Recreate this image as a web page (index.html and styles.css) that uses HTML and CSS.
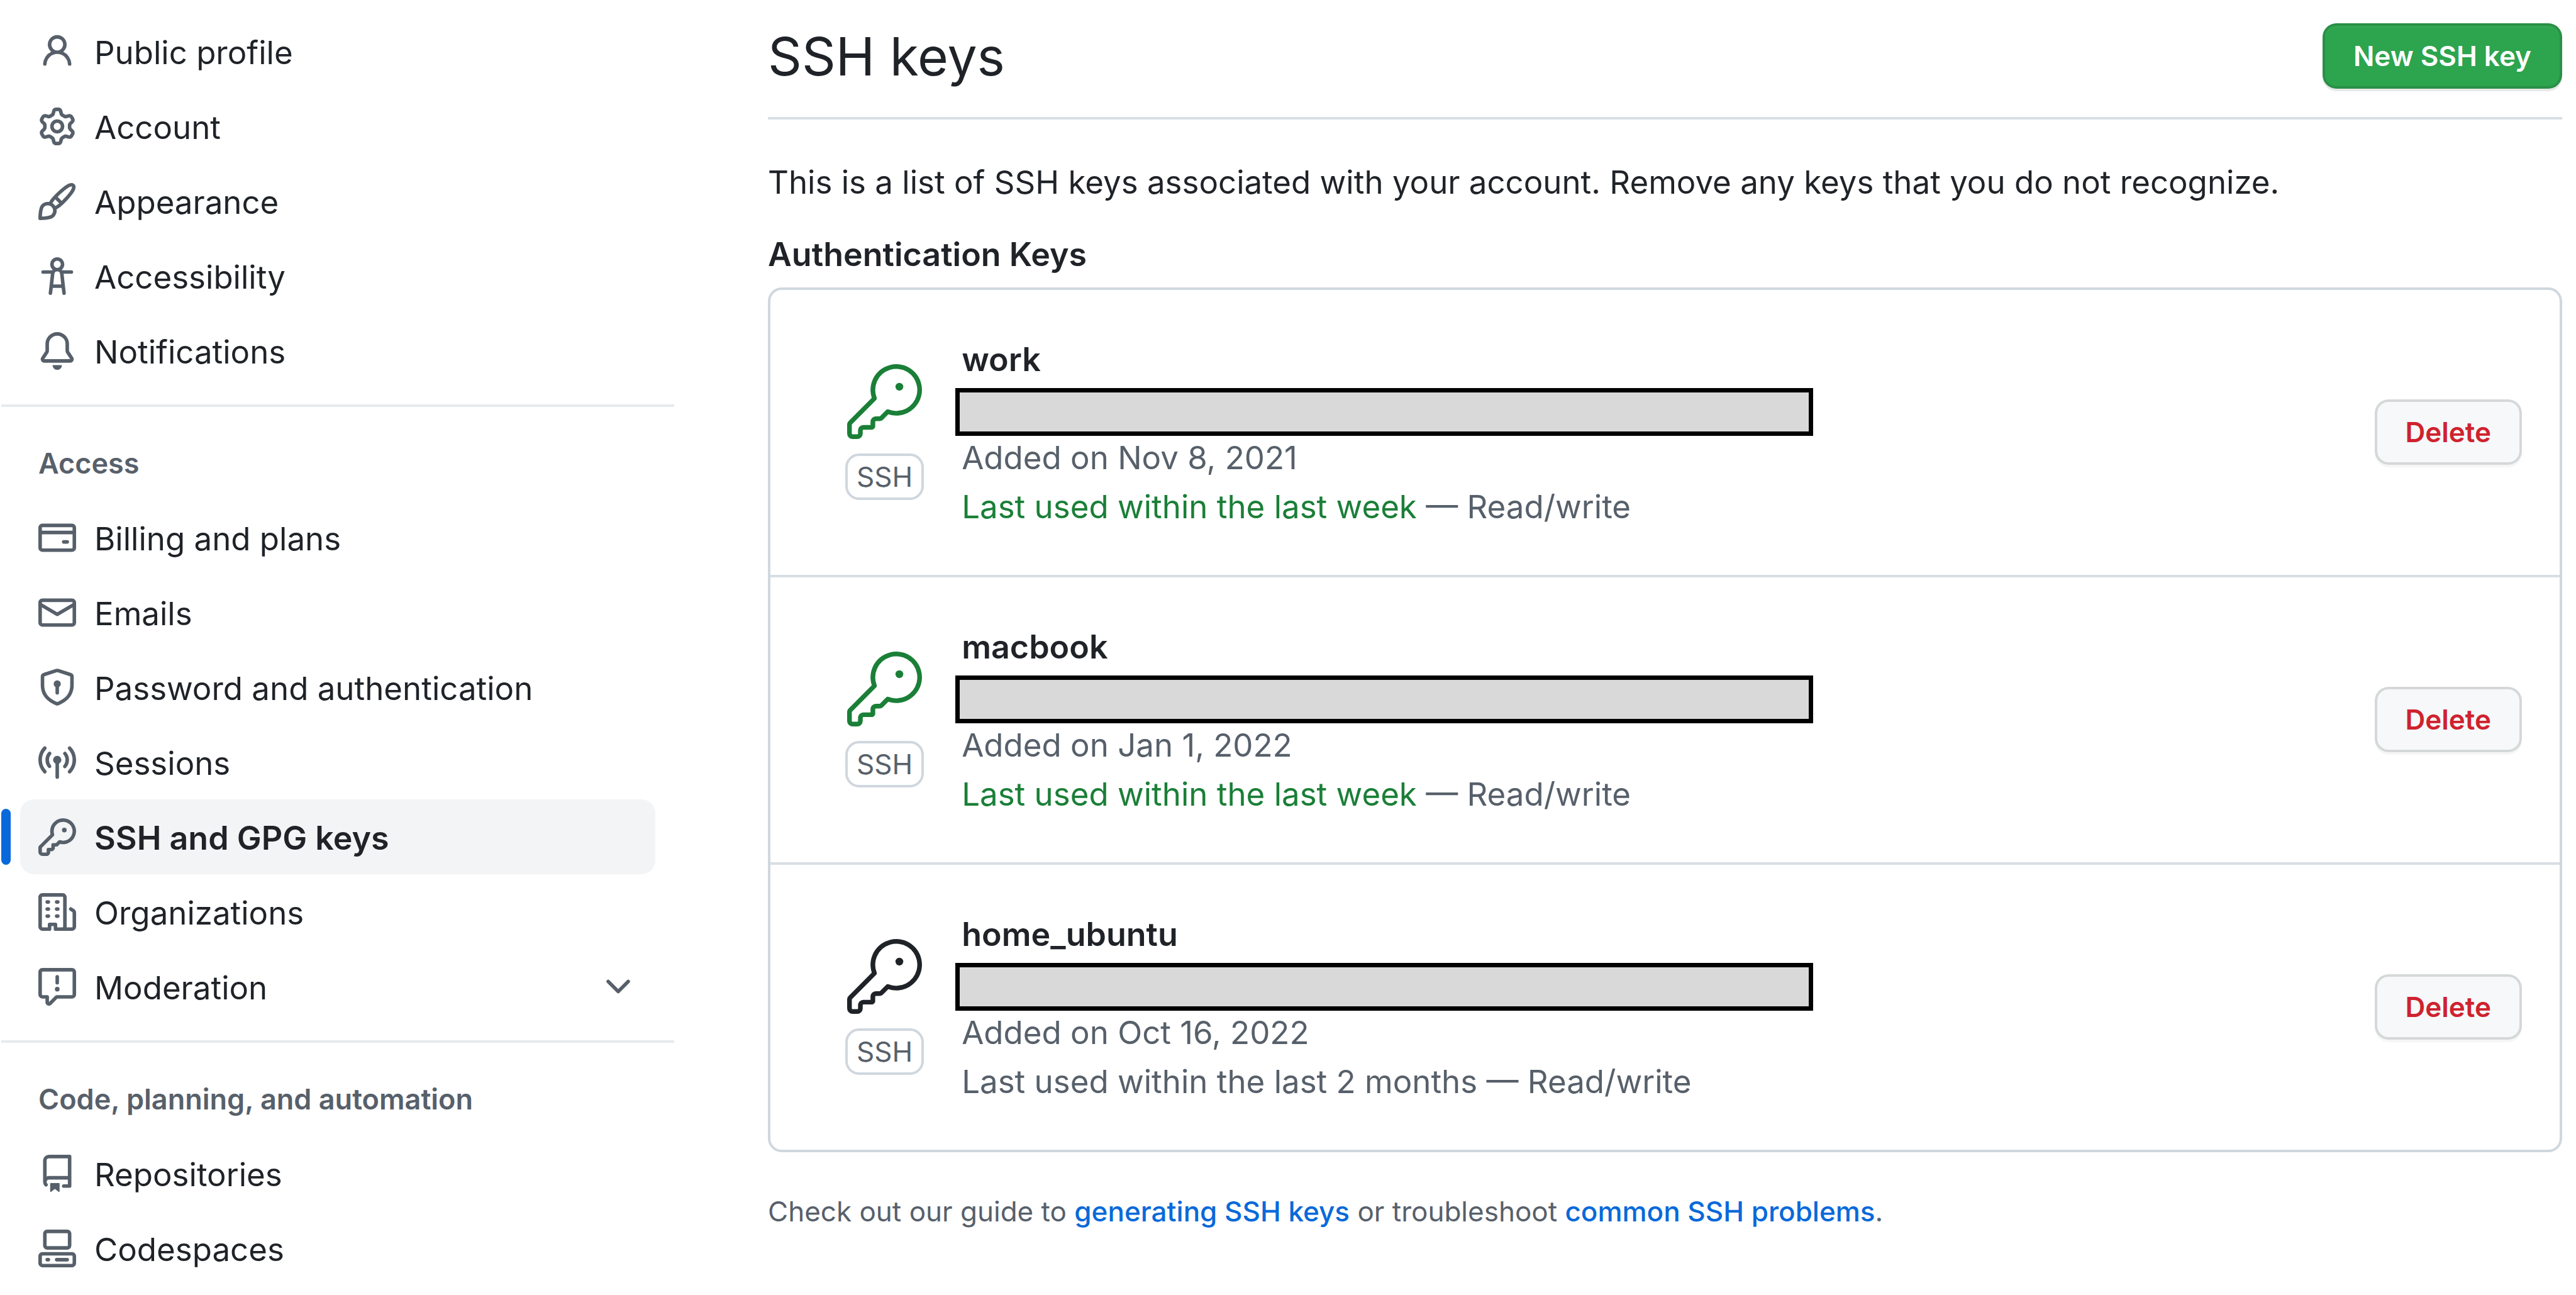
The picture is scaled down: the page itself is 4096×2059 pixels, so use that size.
FILE: index.html
```html
<!DOCTYPE html>
<html lang="en">
<head>
<meta charset="utf-8">
<title>SSH and GPG keys</title>
<meta name="viewport" content="width=device-width, initial-scale=1">
<link rel="stylesheet" href="styles.css">
</head>
<body>
<svg class="sprite" aria-hidden="true">
  <symbol id="person" viewBox="0 0 16 16"><path d="M10.561 8.073a6.005 6.005 0 0 1 3.432 5.142.75.75 0 1 1-1.498.07 4.5 4.5 0 0 0-8.99 0 .75.75 0 0 1-1.498-.07 6.004 6.004 0 0 1 3.431-5.142 3.999 3.999 0 1 1 5.123 0ZM10.5 5a2.5 2.5 0 1 0-5 0 2.5 2.5 0 0 0 5 0Z"/></symbol>
  <symbol id="gear" viewBox="0 0 16 16"><path d="M8 0a8.2 8.2 0 0 1 .701.031C9.444.095 9.99.645 10.16 1.29l.288 1.107c.018.066.079.158.212.224.231.114.454.243.668.386.123.082.233.09.299.071l1.103-.303c.644-.176 1.392.021 1.82.63.27.385.506.792.704 1.218.315.675.111 1.422-.364 1.891l-.814.806c-.049.048-.098.147-.088.294.016.257.016.515 0 .772-.01.147.038.246.088.294l.814.806c.475.469.679 1.216.364 1.891a7.977 7.977 0 0 1-.704 1.217c-.428.61-1.176.807-1.82.63l-1.102-.302c-.067-.019-.177-.011-.3.071a5.909 5.909 0 0 1-.668.386c-.133.066-.194.158-.211.224l-.29 1.106c-.168.646-.715 1.196-1.458 1.26a8.006 8.006 0 0 1-1.402 0c-.743-.064-1.289-.614-1.458-1.26l-.289-1.106c-.018-.066-.079-.158-.212-.224a5.738 5.738 0 0 1-.668-.386c-.123-.082-.233-.09-.299-.071l-1.103.303c-.644.176-1.392-.021-1.82-.63a8.12 8.12 0 0 1-.704-1.218c-.315-.675-.111-1.422.363-1.891l.815-.806c.05-.048.098-.147.088-.294a6.214 6.214 0 0 1 0-.772c.01-.147-.038-.246-.088-.294l-.815-.806C.635 6.045.431 5.298.746 4.623a7.92 7.92 0 0 1 .704-1.217c.428-.61 1.176-.807 1.82-.63l1.102.302c.067.019.177.011.3-.071.214-.143.437-.272.668-.386.133-.066.194-.158.211-.224l.29-1.106C6.009.645 6.556.095 7.299.03 7.53.01 7.764 0 8 0Zm-.571 1.525c-.036.003-.108.036-.137.146l-.289 1.105c-.147.561-.549.967-.998 1.189-.173.086-.34.183-.5.29-.417.278-.97.423-1.529.27l-1.103-.303c-.109-.03-.175.016-.195.045-.22.312-.412.644-.573.99-.014.031-.021.11.059.19l.815.806c.411.406.562.957.53 1.456a4.709 4.709 0 0 0 0 .582c.032.499-.119 1.05-.53 1.456l-.815.806c-.081.08-.073.159-.059.19.162.346.353.677.573.989.02.03.085.076.195.046l1.102-.303c.56-.153 1.113-.008 1.53.27.161.107.328.204.501.29.447.222.85.629.997 1.189l.289 1.105c.029.109.101.143.137.146a6.6 6.6 0 0 0 1.142 0c.036-.003.108-.036.137-.146l.289-1.105c.147-.561.549-.967.998-1.189.173-.086.34-.183.5-.29.417-.278.97-.423 1.529-.27l1.103.303c.109.029.175-.016.195-.045.22-.313.411-.644.573-.99.014-.031.021-.11-.059-.19l-.815-.806c-.411-.406-.562-.957-.53-1.456a4.709 4.709 0 0 0 0-.582c-.032-.499.119-1.05.53-1.456l.815-.806c.081-.08.073-.159.059-.19a6.464 6.464 0 0 0-.573-.989c-.02-.03-.085-.076-.195-.046l-1.102.303c-.56.153-1.113.008-1.53-.27a4.44 4.44 0 0 0-.501-.29c-.447-.222-.85-.629-.997-1.189l-.289-1.105c-.029-.11-.101-.143-.137-.146a6.6 6.6 0 0 0-1.142 0ZM11 8a3 3 0 1 1-6 0 3 3 0 0 1 6 0ZM9.5 8a1.5 1.5 0 1 0-3.001.001A1.5 1.5 0 0 0 9.5 8Z"/></symbol>
  <symbol id="paintbrush" viewBox="0 0 16 16"><path d="M11.134 1.535c.7-.509 1.416-.942 2.076-1.155.649-.21 1.463-.267 2.069.34.603.601.568 1.411.368 2.07-.202.668-.624 1.39-1.125 2.096-1.011 1.424-2.496 2.987-3.775 4.249-1.098 1.084-2.132 1.839-3.04 2.3a3.744 3.744 0 0 1-1.055 3.217c-.431.431-1.065.691-1.657.861-.614.177-1.294.287-1.914.357A21.151 21.151 0 0 1 .797 16H.743l.007-.75H.749L.742 16a.75.75 0 0 1-.743-.742l.743-.008-.742.007v-.054a21.25 21.25 0 0 1 .13-2.284c.067-.647.187-1.287.358-1.914.17-.591.43-1.226.86-1.657a3.746 3.746 0 0 1 3.227-1.054c.466-.893 1.225-1.907 2.314-2.982 1.271-1.255 2.833-2.75 4.245-3.777ZM1.62 13.089c-.051.464-.086.929-.104 1.395.466-.018.932-.053 1.396-.104a10.511 10.511 0 0 0 1.668-.309c.526-.151.856-.325 1.011-.48a2.25 2.25 0 1 0-3.182-3.182c-.155.155-.329.485-.48 1.01a10.515 10.515 0 0 0-.309 1.67Zm10.396-10.34c-1.224.89-2.605 2.189-3.822 3.384l1.718 1.718c1.21-1.205 2.51-2.597 3.387-3.833.47-.662.78-1.227.912-1.662.134-.444.032-.551.009-.575h-.001V1.78c-.014-.014-.113-.113-.548.027-.432.14-.995.462-1.655.942Zm-4.832 7.266-.001.001a9.859 9.859 0 0 0 1.63-1.142L7.155 7.216a9.7 9.7 0 0 0-1.161 1.607c.482.302.889.71 1.19 1.192Z"/></symbol>
  <symbol id="accessibility" viewBox="0 0 16 16"><path d="M9.923 5.302c.063.063.122.129.178.198H14A.75.75 0 0 1 14 7h-3.3l.578 5.163.362 2.997a.75.75 0 0 1-1.49.18L9.868 13H6.132l-.282 2.34a.75.75 0 0 1-1.49-.18l.362-2.997L5.3 7H2a.75.75 0 0 1 0-1.5h3.9a2.54 2.54 0 0 1 .176-.198 3 3 0 1 1 3.847 0ZM9.2 7.073h-.001a1.206 1.206 0 0 0-2.398 0L6.305 11.5h3.39ZM9.5 3a1.5 1.5 0 1 0-3.001.001A1.5 1.5 0 0 0 9.5 3Z"/></symbol>
  <symbol id="bell" viewBox="0 0 16 16"><path d="M8 16a2 2 0 0 0 1.985-1.75c.017-.137-.097-.25-.235-.25h-3.5c-.138 0-.252.113-.235.25A2 2 0 0 0 8 16ZM3 5a5 5 0 0 1 10 0v2.947c0 .05.015.098.042.139l1.703 2.555A1.519 1.519 0 0 1 13.482 13H2.518a1.516 1.516 0 0 1-1.263-2.36l1.703-2.554A.255.255 0 0 0 3 7.947Zm5-3.5A3.5 3.5 0 0 0 4.5 5v2.947c0 .346-.102.683-.294.97l-1.703 2.556a.017.017 0 0 0-.003.01l.001.006c0 .002.002.004.004.006l.006.004.007.001h10.964l.007-.001.006-.004.004-.006.001-.007a.017.017 0 0 0-.003-.01l-1.703-2.554a1.745 1.745 0 0 1-.294-.97V5A3.5 3.5 0 0 0 8 1.5Z"/></symbol>
  <symbol id="card" viewBox="0 0 16 16"><path d="M10.75 9a.75.75 0 0 0 0 1.5h1.5a.75.75 0 0 0 0-1.5h-1.5Z"/><path d="M0 3.75C0 2.784.784 2 1.75 2h12.5c.966 0 1.75.784 1.75 1.75v8.5A1.75 1.75 0 0 1 14.25 14H1.75A1.75 1.75 0 0 1 0 12.25ZM14.5 6.5h-13v5.75c0 .138.112.25.25.25h12.5a.25.25 0 0 0 .25-.25Zm0-2.75a.25.25 0 0 0-.25-.25H1.75a.25.25 0 0 0-.25.25V5h13Z"/></symbol>
  <symbol id="mail" viewBox="0 0 16 16"><path d="M1.75 2h12.5c.966 0 1.75.784 1.75 1.75v8.5A1.75 1.75 0 0 1 14.25 14H1.75A1.75 1.75 0 0 1 0 12.25v-8.5C0 2.784.784 2 1.75 2ZM1.5 12.251c0 .138.112.25.25.25h12.5a.25.25 0 0 0 .25-.25V5.809L8.38 9.397a.75.75 0 0 1-.76 0L1.5 5.809v6.442Zm13-8.181v-.32a.25.25 0 0 0-.25-.25H1.75a.25.25 0 0 0-.25.25v.32L8 7.88Z"/></symbol>
  <symbol id="shield" viewBox="0 0 16 16"><path d="m8.533.133 5.25 1.68A1.75 1.75 0 0 1 15 3.48V7c0 1.566-.32 3.182-1.303 4.682-.983 1.498-2.585 2.813-5.032 3.855a1.697 1.697 0 0 1-1.33 0c-2.447-1.042-4.049-2.357-5.032-3.855C1.32 10.182 1 8.566 1 7V3.48a1.755 1.755 0 0 1 1.217-1.667l5.25-1.68a1.748 1.748 0 0 1 1.066 0Zm-.61 1.429.001.001-5.25 1.68a.251.251 0 0 0-.174.237V7c0 1.36.275 2.666 1.057 3.859.784 1.194 2.121 2.342 4.366 3.298a.196.196 0 0 0 .154 0c2.245-.957 3.582-2.103 4.366-3.297C13.225 9.666 13.5 8.358 13.5 7V3.48a.25.25 0 0 0-.174-.238l-5.25-1.68a.25.25 0 0 0-.153 0ZM9.5 6.5c0 .536-.286 1.032-.75 1.3v2.45a.75.75 0 0 1-1.5 0V7.8A1.5 1.5 0 1 1 9.5 6.5Z"/></symbol>
  <symbol id="broadcast" viewBox="0 0 16 16"><path d="M8.75 8.582v5.668a.75.75 0 0 1-1.5 0V8.582a1.75 1.75 0 1 1 1.5 0Zm3.983-7.125a.75.75 0 0 1 1.06.026A7.976 7.976 0 0 1 16 7c0 2.139-.84 4.083-2.207 5.517a.75.75 0 1 1-1.086-1.034A6.474 6.474 0 0 0 14.5 7a6.474 6.474 0 0 0-1.793-4.483.75.75 0 0 1 .026-1.06Zm-9.466 0c.3.286.312.76.026 1.06A6.474 6.474 0 0 0 1.5 7a6.47 6.47 0 0 0 1.793 4.483.75.75 0 0 1-1.086 1.034A7.973 7.973 0 0 1 0 7c0-2.139.84-4.083 2.207-5.517a.75.75 0 0 1 1.06-.026Zm8.556 2.321A4.988 4.988 0 0 1 13 7a4.988 4.988 0 0 1-1.177 3.222.75.75 0 1 1-1.146-.967A3.487 3.487 0 0 0 11.5 7c0-.86-.309-1.645-.823-2.255a.75.75 0 0 1 1.146-.967Zm-6.492.958A3.48 3.48 0 0 0 4.5 7a3.48 3.48 0 0 0 .823 2.255.75.75 0 0 1-1.146.967A4.981 4.981 0 0 1 3 7a4.982 4.982 0 0 1 1.188-3.236.75.75 0 1 1 1.143.972Z"/></symbol>
  <symbol id="key" viewBox="0 0 16 16"><path d="M10.5 0a5.499 5.499 0 1 1-1.288 10.848l-.932.932a.749.749 0 0 1-.53.22H7v.75a.749.749 0 0 1-.22.53l-.5.5a.749.749 0 0 1-.53.22H5v.75a.749.749 0 0 1-.22.53l-.5.5a.749.749 0 0 1-.53.22h-2A1.75 1.75 0 0 1 0 14.25v-2c0-.199.079-.389.22-.53l4.932-4.932A5.5 5.5 0 0 1 10.5 0Zm-4 5.5c-.001.431.069.86.205 1.269a.75.75 0 0 1-.181.768L1.5 12.56v1.69c0 .138.112.25.25.25h1.69l.06-.06v-1.19a.75.75 0 0 1 .75-.75h1.19l.06-.06v-1.19a.75.75 0 0 1 .75-.75h1.19l1.023-1.025a.75.75 0 0 1 .768-.18A4 4 0 1 0 6.5 5.5ZM11 6a1 1 0 1 1 0-2 1 1 0 0 1 0 2Z"/></symbol>
  <symbol id="organization" viewBox="0 0 16 16"><path d="M1.75 16A1.75 1.75 0 0 1 0 14.25V1.75C0 .784.784 0 1.75 0h8.5C11.216 0 12 .784 12 1.75v12.5c0 .085-.006.168-.018.25h2.268a.25.25 0 0 0 .25-.25V8.285a.25.25 0 0 0-.111-.208l-1.055-.703a.749.749 0 1 1 .832-1.248l1.055.703c.487.325.779.871.779 1.456v5.965A1.75 1.75 0 0 1 14.25 16h-3.5a.766.766 0 0 1-.197-.026c-.099.017-.2.026-.303.026h-3a.75.75 0 0 1-.75-.75V14h-1v1.25a.75.75 0 0 1-.75.75Zm-.25-1.75c0 .138.112.25.25.25H4v-1.25a.75.75 0 0 1 .75-.75h2.5a.75.75 0 0 1 .75.75v1.25h2.25a.25.25 0 0 0 .25-.25V1.75a.25.25 0 0 0-.25-.25h-8.5a.25.25 0 0 0-.25.25ZM3.75 6h.5a.75.75 0 0 1 0 1.5h-.5a.75.75 0 0 1 0-1.5ZM3 3.75A.75.75 0 0 1 3.75 3h.5a.75.75 0 0 1 0 1.5h-.5A.75.75 0 0 1 3 3.75Zm4 3A.75.75 0 0 1 7.75 6h.5a.75.75 0 0 1 0 1.5h-.5A.75.75 0 0 1 7 6.75ZM7.75 3h.5a.75.75 0 0 1 0 1.5h-.5a.75.75 0 0 1 0-1.5ZM3 9.75A.75.75 0 0 1 3.75 9h.5a.75.75 0 0 1 0 1.5h-.5A.75.75 0 0 1 3 9.75ZM7.75 9h.5a.75.75 0 0 1 0 1.5h-.5a.75.75 0 0 1 0-1.5Z"/></symbol>
  <symbol id="report" viewBox="0 0 16 16"><path d="M0 1.75C0 .784.784 0 1.75 0h12.5C15.216 0 16 .784 16 1.75v9.5A1.75 1.75 0 0 1 14.25 13H8.06l-2.573 2.573A1.458 1.458 0 0 1 3 14.543V13H1.75A1.75 1.75 0 0 1 0 11.25Zm1.75-.25a.25.25 0 0 0-.25.25v9.5c0 .138.112.25.25.25h2a.75.75 0 0 1 .75.75v2.19l2.72-2.72a.749.749 0 0 1 .53-.22h6.5a.25.25 0 0 0 .25-.25v-9.5a.25.25 0 0 0-.25-.25Zm7 2.25v2.5a.75.75 0 0 1-1.5 0v-2.5a.75.75 0 0 1 1.5 0ZM9 9a1 1 0 1 1-2 0 1 1 0 0 1 2 0Z"/></symbol>
  <symbol id="chevron" viewBox="0 0 16 16"><path d="M12.78 5.22a.749.749 0 0 1 0 1.06l-4.25 4.25a.749.749 0 0 1-1.06 0L3.22 6.28a.749.749 0 1 1 1.06-1.06L8 8.939l3.72-3.719a.749.749 0 0 1 1.06 0Z"/></symbol>
  <symbol id="repo" viewBox="0 0 16 16"><path d="M2 2.5A2.5 2.5 0 0 1 4.5 0h8.75a.75.75 0 0 1 .75.75v12.5a.75.75 0 0 1-.75.75h-2.5a.75.75 0 0 1 0-1.5h1.75v-2h-8a1 1 0 0 0-.714 1.7.75.75 0 1 1-1.072 1.05A2.495 2.495 0 0 1 2 11.5Zm10.5-1h-8a1 1 0 0 0-1 1v6.708A2.486 2.486 0 0 1 4.5 9h8ZM5 12.25a.25.25 0 0 1 .25-.25h3.5a.25.25 0 0 1 .25.25v3.25a.25.25 0 0 1-.4.2l-1.45-1.087a.249.249 0 0 0-.3 0L5.4 15.7a.25.25 0 0 1-.4-.2Z"/></symbol>
  <symbol id="codespaces" viewBox="0 0 16 16"><path d="M0 11.25c0-.966.784-1.75 1.75-1.75h12.5c.966 0 1.75.784 1.75 1.75v3A1.75 1.75 0 0 1 14.25 16H1.75A1.75 1.75 0 0 1 0 14.25Zm2-9.5C2 .784 2.784 0 3.75 0h8.5C13.216 0 14 .784 14 1.75v5a1.75 1.75 0 0 1-1.75 1.75h-8.5A1.75 1.75 0 0 1 2 6.75Zm1.75-.25a.25.25 0 0 0-.25.25v5c0 .138.112.25.25.25h8.5a.25.25 0 0 0 .25-.25v-5a.25.25 0 0 0-.25-.25Zm-2 9.5a.25.25 0 0 0-.25.25v3c0 .138.112.25.25.25h12.5a.25.25 0 0 0 .25-.25v-3a.25.25 0 0 0-.25-.25Z"/><path d="M7 12.75a.75.75 0 0 1 .75-.75h4.5a.75.75 0 0 1 0 1.5h-4.5a.75.75 0 0 1-.75-.75Zm-4 0a.75.75 0 0 1 .75-.75h.5a.75.75 0 0 1 0 1.5h-.5a.75.75 0 0 1-.75-.75Z"/></symbol>
  <symbol id="key-large" viewBox="0 0 24 24"><path d="M16.75 8.5a1.25 1.25 0 1 0 0-2.5 1.25 1.25 0 0 0 0 2.5Z"/><path d="M15.75 0a8.25 8.25 0 1 1-2.541 16.101l-1.636 1.636a1.744 1.744 0 0 1-1.237.513H9.25a.25.25 0 0 0-.25.25v1.448a.876.876 0 0 1-.256.619l-.214.213a.75.75 0 0 1-.545.22H5.25a.25.25 0 0 0-.25.25v1A1.75 1.75 0 0 1 3.25 24h-1.5A1.75 1.75 0 0 1 0 22.25v-2.836c0-.464.185-.908.513-1.236l7.386-7.388A8.249 8.249 0 0 1 15.75 0ZM9 8.25a6.733 6.733 0 0 0 .463 2.462.75.75 0 0 1-.168.804l-7.722 7.721a.25.25 0 0 0-.073.177v2.836c0 .138.112.25.25.25h1.5a.25.25 0 0 0 .25-.25v-1c0-.966.784-1.75 1.75-1.75H7.5v-1c0-.966.784-1.75 1.75-1.75h1.086a.25.25 0 0 0 .177-.073l1.971-1.972a.75.75 0 0 1 .804-.168A6.75 6.75 0 1 0 9 8.25Z"/></symbol>
</svg>

<div class="page">
  <nav class="sidebar" aria-label="Settings">
    <ul class="nav-list">
      <li><a class="nav-item" href="#"><svg class="icon"><use href="#person"/></svg><span class="nav-text">Public profile</span></a></li>
      <li><a class="nav-item" href="#"><svg class="icon"><use href="#gear"/></svg><span class="nav-text">Account</span></a></li>
      <li><a class="nav-item" href="#"><svg class="icon"><use href="#paintbrush"/></svg><span class="nav-text">Appearance</span></a></li>
      <li><a class="nav-item" href="#"><svg class="icon"><use href="#accessibility"/></svg><span class="nav-text">Accessibility</span></a></li>
      <li><a class="nav-item" href="#"><svg class="icon"><use href="#bell"/></svg><span class="nav-text">Notifications</span></a></li>
    </ul>
    <section class="nav-group">
      <h2 class="nav-heading">Access</h2>
      <ul class="nav-list">
        <li><a class="nav-item" href="#"><svg class="icon"><use href="#card"/></svg><span class="nav-text">Billing and plans</span></a></li>
        <li><a class="nav-item" href="#"><svg class="icon"><use href="#mail"/></svg><span class="nav-text">Emails</span></a></li>
        <li><a class="nav-item" href="#"><svg class="icon"><use href="#shield"/></svg><span class="nav-text">Password and authentication</span></a></li>
        <li><a class="nav-item" href="#"><svg class="icon"><use href="#broadcast"/></svg><span class="nav-text">Sessions</span></a></li>
        <li><a class="nav-item active" href="#" aria-current="page"><svg class="icon"><use href="#key"/></svg><span class="nav-text">SSH and GPG keys</span></a></li>
        <li><a class="nav-item" href="#"><svg class="icon"><use href="#organization"/></svg><span class="nav-text">Organizations</span></a></li>
        <li><button class="nav-item" type="button" aria-expanded="false"><svg class="icon"><use href="#report"/></svg><span class="nav-text">Moderation</span><svg class="icon chevron"><use href="#chevron"/></svg></button></li>
      </ul>
    </section>
    <section class="nav-group">
      <h2 class="nav-heading">Code, planning, and automation</h2>
      <ul class="nav-list">
        <li><a class="nav-item" href="#"><svg class="icon"><use href="#repo"/></svg><span class="nav-text">Repositories</span></a></li>
        <li><a class="nav-item" href="#"><svg class="icon"><use href="#codespaces"/></svg><span class="nav-text">Codespaces</span></a></li>
      </ul>
    </section>
  </nav>

  <main class="content">
    <header class="page-head">
      <h1 class="title">SSH keys</h1>
      <button class="btn btn-primary" type="button">New SSH key</button>
    </header>
    <p class="intro">This is a list of SSH keys associated with your account. Remove any keys that you do not recognize.</p>
    <h2 class="list-title">Authentication Keys</h2>
    <ul class="key-list">
      <li class="key-row">
        <div class="key-type"><svg class="key-icon recent"><use href="#key-large"/></svg><span class="label">SSH</span></div>
        <div class="key-info">
          <strong class="key-name">work</strong>
          <span class="redacted"></span>
          <span>Added on Nov 8, 2021</span>
          <span><span class="recent">Last used within the last week</span> — Read/write</span>
        </div>
        <button class="btn btn-danger" type="button">Delete</button>
      </li>
      <li class="key-row">
        <div class="key-type"><svg class="key-icon recent"><use href="#key-large"/></svg><span class="label">SSH</span></div>
        <div class="key-info">
          <strong class="key-name">macbook</strong>
          <span class="redacted"></span>
          <span>Added on Jan 1, 2022</span>
          <span><span class="recent">Last used within the last week</span> — Read/write</span>
        </div>
        <button class="btn btn-danger" type="button">Delete</button>
      </li>
      <li class="key-row">
        <div class="key-type"><svg class="key-icon"><use href="#key-large"/></svg><span class="label">SSH</span></div>
        <div class="key-info">
          <strong class="key-name">home_ubuntu</strong>
          <span class="redacted"></span>
          <span>Added on Oct 16, 2022</span>
          <span>Last used within the last 2 months — Read/write</span>
        </div>
        <button class="btn btn-danger" type="button">Delete</button>
      </li>
    </ul>
    <p class="note">Check out our guide to <a href="#">generating SSH keys</a> or troubleshoot <a href="#">common SSH problems</a>.</p>
  </main>
</div>
</body>
</html>
```
FILE: styles.css
```css
:root {
  --fg: #1f2328;
  --muted: #57606a;
  --border: #d0d7de;
  --green: #1a7f37;
  --blue: #0969da;
  --text: 51px;
  --text-strong: 52px;
  --text-small: 44px;
}

* {
  box-sizing: border-box;
}

body {
  margin: 0;
  background: #fff;
  color: var(--fg);
  font-family: Inter, "Liberation Sans", sans-serif;
  font-size: var(--text);
  line-height: 78px;
}

h1, h2, p, ul {
  margin: 0;
  padding: 0;
}

ul {
  list-style: none;
}

a {
  color: var(--blue);
  text-decoration: none;
}

button {
  font: inherit;
  cursor: pointer;
}

svg {
  fill: currentColor;
}

.sprite {
  display: none;
}

.page {
  display: grid;
  grid-template-columns: 1070px minmax(0, 1fr);
  column-gap: 149px;
  padding: 22px 22px 0 2px;
}

/* Sidebar */
.nav-list {
  padding: 0 30px;
}

.nav-item {
  position: relative;
  display: flex;
  align-items: center;
  gap: 29px;
  width: 100%;
  height: 119px;
  padding: 0 29px;
  border: 0;
  border-radius: 22px;
  background: none;
  color: var(--fg);
  text-align: left;
}

.nav-text {
  padding-top: 4px;
}

.icon {
  flex: none;
  width: 60px;
  height: 60px;
  color: var(--muted);
}

.chevron {
  margin-left: auto;
}

.active {
  background: #f3f4f6;
  font-size: var(--text-strong);
  font-weight: 600;
}

.active::before {
  content: "";
  position: absolute;
  top: 15px;
  bottom: 15px;
  left: -30px;
  width: 15px;
  border-radius: 8px;
  background: var(--blue);
}

.nav-group {
  margin-top: 26px;
  border-top: 4px solid #e6eaee;
}

.nav-heading {
  padding: 60px 59px 28px;
  color: var(--muted);
  font-size: 45px;
  font-weight: 600;
  line-height: 60px;
}

/* Main column */
.page-head {
  display: flex;
  align-items: center;
  justify-content: space-between;
  padding: 15px 0 45px;
  border-bottom: 4px solid #d8dee4;
}

.title {
  padding-top: 2px;
  font-size: 84px;
  font-weight: 400;
  line-height: 102px;
}

.btn {
  height: 104px;
  padding: 0 45px;
  border: 4px solid rgba(27, 31, 36, 0.15);
  border-radius: 22px;
  font-size: var(--text-small);
  font-weight: 600;
  line-height: 60px;
}

.btn-primary {
  background: #2da44e;
  color: #fff;
  box-shadow: 0 4px 0 rgba(27, 31, 36, 0.1), inset 0 4px 0 rgba(255, 255, 255, 0.03);
}

.btn-danger {
  background: #f6f8fa;
  color: #cf222e;
  box-shadow: 0 4px 0 rgba(27, 31, 36, 0.04);
}

.intro {
  margin-top: 61px;
}

.list-title {
  margin-top: 37px;
  font-size: var(--text-strong);
  font-weight: 600;
}

.key-list {
  margin-top: 13px;
  border: 4px solid var(--border);
  border-radius: 22px;
}

.key-row {
  display: flex;
  align-items: center;
  padding: 68px 60px 69px 119px;
}

.key-row + .key-row {
  border-top: 4px solid #d8dee4;
}

.key-type {
  display: flex;
  flex-direction: column;
  align-items: center;
  gap: 23px;
}

.key-icon {
  width: 119px;
  height: 119px;
}

.label {
  padding: 0 14px;
  border: 4px solid var(--border);
  border-radius: 22px;
  color: var(--muted);
  font-size: var(--text-small);
  line-height: 66px;
}

.key-info {
  display: flex;
  flex: 1;
  flex-direction: column;
  padding: 4px 0 0 60px;
  color: var(--muted);
}

.key-name {
  color: var(--fg);
  font-size: var(--text-strong);
  font-weight: 600;
}

.recent {
  color: var(--green);
}

.key-icon:not(.recent) {
  color: var(--fg);
}

/* Cover over the key fingerprint */
.redacted {
  width: 1364px;
  height: 76px;
  margin: 6px 0 -4px -10px;
  border: 7px solid #000;
  background: #d9d9d9;
}

.note {
  margin-top: 64px;
  color: var(--muted);
  font-size: var(--text-small);
  line-height: 60px;
}

.note a {
  font-weight: 500;
}
```
